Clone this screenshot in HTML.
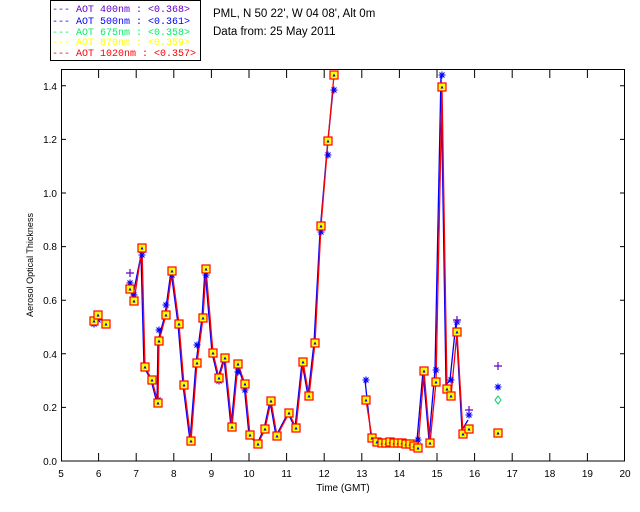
<!DOCTYPE html>
<html><head><meta charset="utf-8"><style>
html,body{margin:0;padding:0;background:#fff;width:640px;height:512px;overflow:hidden}
svg{display:block;font-family:"Liberation Sans","DejaVu Sans",sans-serif}
</style></head><body>
<svg width="640" height="512" viewBox="0 0 640 512">
<defs>
<g id="m"><rect x="-4" y="-4" width="8" height="8" fill="#ff0" stroke="#f00" stroke-width="1.2"/><path d="M-1.5,1.5 L0,-1.5 L1.5,1.5Z" fill="#00f"/></g>
<g id="a" stroke="#00f" stroke-width="1.1"><path d="M-3.5,0H3.5M0,-3.5V3.5M-2.5,-2.5L2.5,2.5M-2.5,2.5L2.5,-2.5"/></g>
<g id="p" stroke="#60c" stroke-width="1.2"><path d="M-4,0H4M0,-4V4"/></g>
</defs>
<!-- legend -->
<rect x="50.5" y="0.5" width="150" height="60" fill="#fff" stroke="#000"/>
<g font-size="10" font-family="Liberation Mono, monospace" xml:space="preserve">
<text x="52" y="12" fill="#60c">--- AOT  400nm : &lt;0.368&gt;</text>
<text x="52" y="24" fill="#00f">--- AOT  500nm : &lt;0.361&gt;</text>
<text x="52" y="35" fill="#0e6">--- AOT  675nm : &lt;0.358&gt;</text>
<text x="52" y="45" fill="#ff0">--- AOT  870nm : &lt;0.359&gt;</text>
<text x="52" y="56" fill="#f00">--- AOT 1020nm : &lt;0.357&gt;</text>
</g>
<text x="213" y="17" font-size="11.5">PML, N 50 22', W 04 08', Alt 0m</text>
<text x="213" y="35" font-size="11.5">Data from: 25 May 2011</text>
<!-- frame -->
<rect x="61.5" y="69.5" width="563" height="391.5" fill="none" stroke="#000"/>
<g stroke="#000">
<path d="M61,461h5M61,407.4h5M61,353.8h5M61,300.2h5M61,246.6h5M61,193h5M61,139.4h5M61,85.8h5
M625,461h-5M625,407.4h-5M625,353.8h-5M625,300.2h-5M625,246.6h-5M625,193h-5M625,139.4h-5M625,85.8h-5"/>
<path d="M98.6,461v-8M136.2,461v-8M173.8,461v-8M211.4,461v-8M249,461v-8M286.6,461v-8M324.2,461v-8M361.8,461v-8M399.4,461v-8M437,461v-8M474.6,461v-8M512.2,461v-8M549.8,461v-8M587.4,461v-8
M98.6,70v8M136.2,70v8M173.8,70v8M211.4,70v8M249,70v8M286.6,70v8M324.2,70v8M361.8,70v8M399.4,70v8M437,70v8M474.6,70v8M512.2,70v8M549.8,70v8M587.4,70v8"/>
</g>
<g font-size="10" text-anchor="end">
<text x="57" y="465">0.0</text><text x="57" y="411">0.2</text><text x="57" y="358">0.4</text><text x="57" y="304">0.6</text>
<text x="57" y="250">0.8</text><text x="57" y="197">1.0</text><text x="57" y="143">1.2</text><text x="57" y="90">1.4</text>
</g>
<g font-size="10" text-anchor="middle">
<text x="61" y="477">5</text><text x="98.6" y="477">6</text><text x="136.2" y="477">7</text><text x="173.8" y="477">8</text><text x="211.4" y="477">9</text><text x="249" y="477">10</text><text x="286.6" y="477">11</text><text x="324.2" y="477">12</text><text x="361.8" y="477">13</text><text x="399.4" y="477">14</text><text x="437" y="477">15</text><text x="474.6" y="477">16</text><text x="512.2" y="477">17</text><text x="549.8" y="477">18</text><text x="587.4" y="477">19</text><text x="625" y="477">20</text>
<text x="343" y="491">Time (GMT)</text>
<text transform="translate(33,265) rotate(-90)" font-size="9">Aerosol Optical Thickness</text>
</g>
<!-- data lines -->
<g fill="none" stroke-width="1.3">
<g stroke="#00f" transform="translate(-1,0)">
<polyline points="130,283 134,295 142,255 145,367 152,380 158,403 159,341 166,315 172,271 179,324 184,385 191,441 197,363 203,318 206,269 213,353 219,378 225,358 232,427 238,364 245,384 250,435 258,444 265,429 271,401 277,436 289,413 296,428 303,362 309,396 315,343 321,232 328,150 334,90"/>
<polyline points="366,380 372,436 377,442 382,443 386,443 390,442 394,443 398,443 402,443 406,444 410,444 414,446 418,440 424,371 430,440 436,370 442,75 447,385 451,380 457,322 463,430 469,420"/>
</g>
<g stroke="#f00">
<polyline points="130,289 134,301 142,248 145,367 152,380 158,403 159,341 166,315 172,271 179,324 184,385 191,441 197,363 203,318 206,269 213,353 219,378 225,358 232,427 238,364 245,384 250,435 258,444 265,429 271,401 277,436 289,413 296,428 303,362 309,396 315,343 321,226 328,141 334,75"/>
<polyline points="366,400 372,438 377,442 382,443 386,443 390,442 394,443 398,443 402,443 406,444 410,444 414,446 418,448 424,371 430,443 436,382 442,87 447,389 451,396 457,332 463,434 469,429"/>
</g>
</g>
<!-- asterisks -->
<g>
<use href="#a" x="94" y="324"/><use href="#a" x="98" y="320"/><use href="#a" x="106" y="325"/>
<use href="#a" x="130" y="283"/><use href="#a" x="134" y="295"/><use href="#a" x="142" y="255"/><use href="#a" x="145" y="367"/><use href="#a" x="152" y="380"/><use href="#a" x="158" y="400"/><use href="#a" x="159" y="330"/><use href="#a" x="166" y="305"/><use href="#a" x="172" y="275"/><use href="#a" x="179" y="324"/><use href="#a" x="197" y="345"/><use href="#a" x="206" y="275"/><use href="#a" x="219" y="381"/><use href="#a" x="238" y="372"/><use href="#a" x="245" y="390"/><use href="#a" x="321" y="232"/><use href="#a" x="328" y="155"/><use href="#a" x="334" y="90"/><use href="#a" x="366" y="380"/><use href="#a" x="418" y="440"/><use href="#a" x="436" y="370"/><use href="#a" x="442" y="75"/><use href="#a" x="451" y="380"/><use href="#a" x="457" y="322"/><use href="#a" x="469" y="415"/><use href="#a" x="498" y="387"/>
<use href="#p" x="130" y="273"/><use href="#p" x="457" y="320"/><use href="#p" x="469" y="410"/><use href="#p" x="498" y="366"/>
<path d="M498,396l3,4-3,4-3-4z" fill="none" stroke="#0c6"/>
</g>
<!-- squares -->
<g>
<use href="#m" x="94" y="321"/><use href="#m" x="98" y="315"/><use href="#m" x="106" y="324"/><use href="#m" x="130" y="289"/><use href="#m" x="134" y="301"/><use href="#m" x="142" y="248"/><use href="#m" x="145" y="367"/><use href="#m" x="152" y="380"/><use href="#m" x="158" y="403"/><use href="#m" x="159" y="341"/><use href="#m" x="166" y="315"/><use href="#m" x="172" y="271"/><use href="#m" x="179" y="324"/><use href="#m" x="184" y="385"/><use href="#m" x="191" y="441"/><use href="#m" x="197" y="363"/><use href="#m" x="203" y="318"/><use href="#m" x="206" y="269"/><use href="#m" x="213" y="353"/><use href="#m" x="219" y="378"/><use href="#m" x="225" y="358"/><use href="#m" x="232" y="427"/><use href="#m" x="238" y="364"/><use href="#m" x="245" y="384"/><use href="#m" x="250" y="435"/><use href="#m" x="258" y="444"/><use href="#m" x="265" y="429"/><use href="#m" x="271" y="401"/><use href="#m" x="277" y="436"/><use href="#m" x="289" y="413"/><use href="#m" x="296" y="428"/><use href="#m" x="303" y="362"/><use href="#m" x="309" y="396"/><use href="#m" x="315" y="343"/><use href="#m" x="321" y="226"/><use href="#m" x="328" y="141"/><use href="#m" x="334" y="75"/>
<use href="#m" x="366" y="400"/><use href="#m" x="372" y="438"/><use href="#m" x="377" y="442"/><use href="#m" x="382" y="443"/><use href="#m" x="386" y="443"/><use href="#m" x="390" y="442"/><use href="#m" x="394" y="443"/><use href="#m" x="398" y="443"/><use href="#m" x="402" y="443"/><use href="#m" x="406" y="444"/><use href="#m" x="410" y="444"/><use href="#m" x="414" y="446"/><use href="#m" x="418" y="448"/><use href="#m" x="424" y="371"/><use href="#m" x="430" y="443"/><use href="#m" x="436" y="382"/><use href="#m" x="442" y="87"/><use href="#m" x="447" y="389"/><use href="#m" x="451" y="396"/><use href="#m" x="457" y="332"/><use href="#m" x="463" y="434"/><use href="#m" x="469" y="429"/><use href="#m" x="498" y="433"/>
</g>
</svg>
</body></html>
